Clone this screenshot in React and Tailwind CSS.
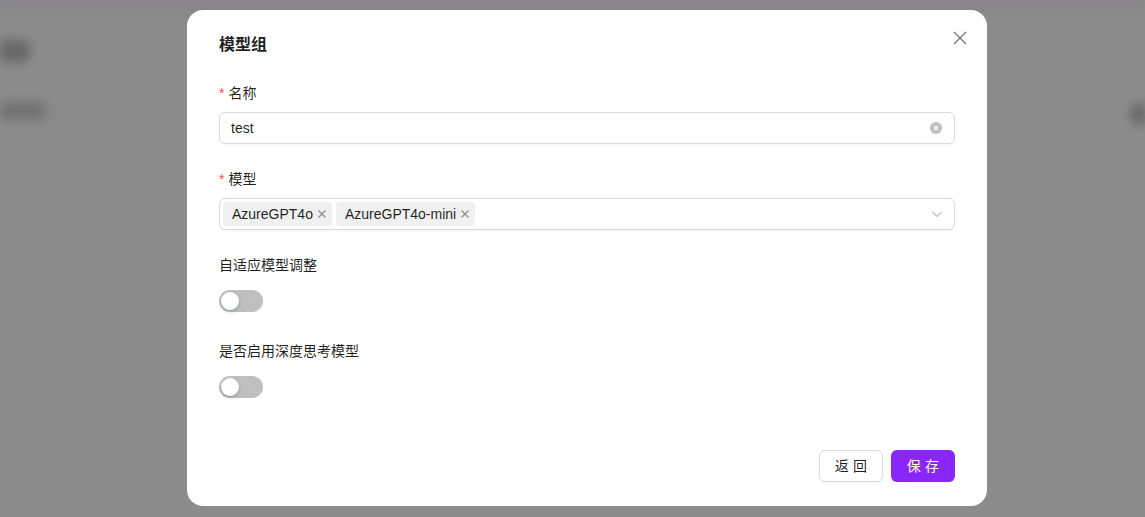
import React, { useState } from 'react';

const font = { fontFamily: '"Liberation Sans", "Noto Sans CJK SC", Arial, sans-serif' };

const Switch = ({ on, onToggle }) => (
    <button
        onClick={onToggle}
        className={`relative w-[44px] h-[22px] rounded-full ${on ? 'bg-[#8a26fb]' : 'bg-[#bfbfbf]'}`}
        aria-label="toggle"
    >
        <span className={`absolute top-[2px] w-[18px] h-[18px] rounded-full bg-white shadow-[0_2px_4px_rgba(0,35,11,0.2)] ${on ? 'left-[24px]' : 'left-[2px]'}`} />
    </button>
);

const Tag = ({ label }) => (
    <span className="flex items-center h-[24px] pl-[9px] pr-[5px] bg-[#f0f0f0] rounded-[4px] text-[14px] text-[#000000e0]">
        {label}
        <svg width="10" height="10" viewBox="0 0 10 10" className="ml-[4px]">
            <path d="M1.5 1.5 L8.5 8.5 M8.5 1.5 L1.5 8.5" stroke="#8c8c8c" strokeWidth="1.2" />
        </svg>
    </span>
);

const App = () => {
    const [name, setName] = useState('test');
    const [adaptive, setAdaptive] = useState(false);
    const [deep, setDeep] = useState(false);

    return (
        <div className="relative w-[1145px] h-[517px] overflow-hidden bg-white" style={font}>
            {/* blurred page behind */}
            <div className="flex flex-col blur-[6px]">
                <div className="h-[10px] bg-[#f2eef4]" />
                <div className="flex items-center justify-between pt-[24px] px-0">
                    <div className="w-[30px] h-[22px] bg-[#b9b9b9] rounded-r-[6px]" />
                    <div className="flex gap-3 mr-[-10px]">
                        <div className="w-[140px] h-[34px] border border-[#e6e6e6] rounded-[6px]" />
                        <div className="w-[40px] h-[34px] border border-[#e6e6e6] rounded-[6px]" />
                    </div>
                </div>
                <div className="flex justify-between mt-[34px]">
                    <div className="w-[46px] h-[18px] bg-[#cdcdcd]" />
                    <div className="w-[14px] h-[24px] bg-[#b0b0b0] rounded-l-full" />
                </div>
            </div>

            {/* mask + modal */}
            <div className="absolute inset-0 bg-[rgba(0,0,0,0.45)] flex justify-start pl-[187px]">
                <div className="relative mt-[10px] w-[800px] h-[496px] bg-white rounded-[16px] px-[32px] pt-[23px] flex flex-col">
                    <h2 className="text-[16px] leading-[24px] font-bold text-[#000000e0]">模型组</h2>
                    <button className="absolute top-[20px] right-[19px] w-[16px] h-[16px] flex items-center justify-center" aria-label="close">
                        <svg width="14" height="14" viewBox="0 0 14 14">
                            <path d="M1 1 L13 13 M13 1 L1 13" stroke="#737373" strokeWidth="1.3" />
                        </svg>
                    </button>

                    <label className="mt-[25px] flex items-center h-[22px] text-[14px] text-[#000000e0]">
                        <span className="text-[#ff4d4f] text-[14px] mr-[4px] leading-none">*</span>名称
                    </label>
                    <div className="mt-[8px] h-[32px] flex items-center border border-[#d9d9d9] rounded-[6px] px-[11px] shadow-[0_2px_0_rgba(0,0,0,0.02)]">
                        <input
                            value={name}
                            onChange={(e) => setName(e.target.value)}
                            className="flex-1 outline-none text-[14px] text-[#000000e0] bg-transparent"
                            style={font}
                        />
                        <svg width="12" height="12" viewBox="0 0 12 12" className="mr-[1px]">
                            <circle cx="6" cy="6" r="6" fill="#bfbfbf" />
                            <path d="M4 4 L8 8 M8 4 L4 8" stroke="white" strokeWidth="1.2" />
                        </svg>
                    </div>

                    <label className="mt-[24px] flex items-center h-[22px] text-[14px] text-[#000000e0]">
                        <span className="text-[#ff4d4f] text-[14px] mr-[4px] leading-none">*</span>模型
                    </label>
                    <div className="mt-[8px] h-[32px] flex items-center border border-[#d9d9d9] rounded-[6px] pl-[3px] pr-[11px] shadow-[0_2px_0_rgba(0,0,0,0.02)]">
                        <div className="flex-1 flex items-center gap-[4px]">
                            <Tag label="AzureGPT4o" />
                            <Tag label="AzureGPT4o-mini" />
                        </div>
                        <svg width="12" height="12" viewBox="0 0 12 12">
                            <path d="M1.5 4 L6 8.5 L10.5 4" stroke="#bfbfbf" strokeWidth="1.2" fill="none" />
                        </svg>
                    </div>

                    <label className="mt-[24px] h-[22px] flex items-center text-[14px] text-[#000000e0]">自适应模型调整</label>
                    <div className="mt-[14px] flex">
                        <Switch on={adaptive} onToggle={() => setAdaptive(!adaptive)} />
                    </div>

                    <label className="mt-[28px] h-[22px] flex items-center text-[14px] text-[#000000e0]">是否启用深度思考模型</label>
                    <div className="mt-[14px] flex">
                        <Switch on={deep} onToggle={() => setDeep(!deep)} />
                    </div>

                    <div className="mt-[52px] flex justify-end gap-[8px]">
                        <button className="w-[64px] h-[32px] border border-[#d9d9d9] rounded-[6px] bg-white text-[14px] text-[#000000e0] tracking-[0.3em] pl-[4px] shadow-[0_2px_0_rgba(0,0,0,0.02)]">
                            返回
                        </button>
                        <button className="w-[64px] h-[32px] rounded-[6px] bg-[#8a26fb] text-[14px] text-white tracking-[0.3em] pl-[4px]">
                            保存
                        </button>
                    </div>
                </div>
            </div>
        </div>
    );
};

export default App;
